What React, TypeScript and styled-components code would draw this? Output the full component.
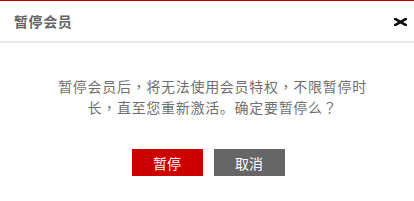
import React from "react";
import styled, { createGlobalStyle } from "styled-components";

const GlobalStyle = createGlobalStyle`
  html, body {
    margin: 0;
    padding: 0;
    background: #fff;
  }
  body {
    font-family: "Noto Sans CJK SC", "Noto Sans", sans-serif;
  }
`;

const Dialog = styled.div`
  width: 414px;
  height: 201px;
  border-top: 1px solid #b30000;
  background: #fff;
  box-sizing: border-box;
`;

const Header = styled.div`
  height: 40px;
  display: flex;
  align-items: center;
  justify-content: space-between;
  padding: 0 7px 0 14px;
  border-bottom: 2px solid #e8e8e8;
`;

const Title = styled.h3`
  margin: 0;
  font-size: 14px;
  font-weight: bold;
  color: #666;
  letter-spacing: 0.6px;
`;

const CloseButton = styled.button`
  border: 0;
  background: none;
  padding: 0;
  width: 14px;
  height: 10px;
  display: flex;
  align-items: center;
  justify-content: center;
  cursor: pointer;
  margin-top: 2px;
`;

const Body = styled.div`
  padding-top: 33px;
`;

const Message = styled.p`
  margin: 0;
  padding: 0 44px 0 55px;
  text-align: center;
  font-size: 14px;
  line-height: 21px;
  letter-spacing: 0.7px;
  color: #6f6f6f;
`;

/* centred full-width punctuation, as in the original */
const Punct = styled.span`
  font-family: "Noto Sans CJK TC", "Noto Sans CJK SC", sans-serif;
`;

const Actions = styled.div`
  display: flex;
  justify-content: center;
  gap: 11px;
  margin-top: 31px;
  padding-left: 2px;
`;

const Button = styled.button<{ $primary?: boolean }>`
  width: 71px;
  height: 27px;
  border: 0;
  padding: 0;
  font-family: inherit;
  font-size: 14px;
  color: #fff;
  background: ${({ $primary }) => ($primary ? "#cc0000" : "#666666")};
  cursor: pointer;
`;

export default function App() {
  return (
    <>
      <GlobalStyle />
      <Dialog>
        <Header>
          <Title>暂停会员</Title>
          <CloseButton aria-label="关闭">
            <svg width="13" height="8" viewBox="0 0 13 8">
              <path
                d="M1 0.8 L12 7.2 M12 0.8 L1 7.2"
                stroke="#111"
                strokeWidth="2.6"
                strokeLinecap="square"
              />
            </svg>
          </CloseButton>
        </Header>
        <Body>
          <Message>
            暂停会员后<Punct>，</Punct>将无法使用会员特权<Punct>，</Punct>不限暂停时长
            <Punct>，</Punct>直至您重新激活。确定要暂停么<Punct>？</Punct>
          </Message>
          <Actions>
            <Button $primary>暂停</Button>
            <Button>取消</Button>
          </Actions>
        </Body>
      </Dialog>
    </>
  );
}
